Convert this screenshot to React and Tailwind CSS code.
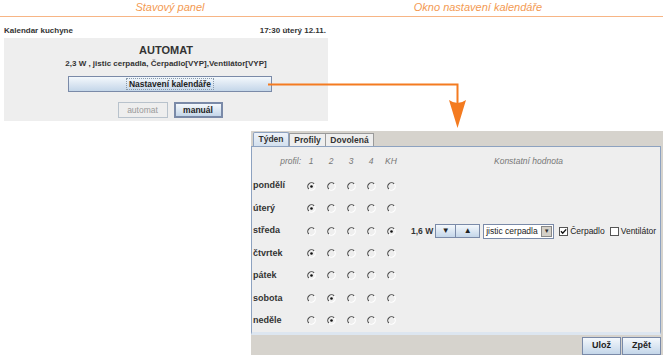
import React from 'react';

const days = [
    { name: 'pondělí', sel: 0 },
    { name: 'úterý', sel: 0 },
    { name: 'středa', sel: 4, extra: true },
    { name: 'čtvrtek', sel: 0 },
    { name: 'pátek', sel: 0 },
    { name: 'sobota', sel: 1 },
    { name: 'neděle', sel: 1 },
];

function Radio({ on }) {
    return (
        <svg width="9" height="9" viewBox="0 0 9 9">
            <path d="M7.2 1.9 A3.6 3.6 0 1 0 1.8 7.1" fill="none" stroke="#4a4a4a" strokeWidth="1.1" />
            <path d="M1.8 7.1 A3.6 3.6 0 0 0 7.2 1.9" fill="none" stroke="#ffffff" strokeWidth="1.1" />
            {on && <circle cx="4.5" cy="4.5" r="1.3" fill="#111" />}
        </svg>
    );
}

function Check({ on }) {
    return (
        <svg width="9" height="9" viewBox="0 0 9 9" className="shrink-0">
            <rect x="0.5" y="0.5" width="8" height="8" fill="#fff" stroke="#555" />
            {on && <path d="M2 4.3 L3.7 6.3 L7.2 2.4" fill="none" stroke="#111" strokeWidth="1.4" />}
        </svg>
    );
}

const ocean = 'bg-gradient-to-b from-[#f4f8fc] to-[#c4d6e9] border border-[#7a8aa8] text-[#222]';

export default function App() {
    return (
        <div className="relative w-[663px] h-[355px] overflow-hidden bg-white font-['Liberation_Sans',Arial,sans-serif] text-[#333]">
            {/* Titles */}
            <div className="flex h-[17px] border-b border-[#f7b585] italic text-[11px] text-[#f39a52] leading-[15px]">
                <div className="w-[340px] text-center">Stavový panel</div>
                <div className="w-[276px] text-center">Okno nastavení kalendáře</div>
            </div>

            {/* Stavovy panel */}
            <div className="ml-[4px] w-[324px]">
                <div className="flex justify-between h-[21px] items-end pb-[2px] text-[8px] font-bold leading-[10px] pr-[2px]">
                    <span>Kalendar kuchyne</span>
                    <span>17:30 úterý 12.11.</span>
                </div>
                <div className="h-[83px] bg-[#eeeeee] flex flex-col items-center pt-[5px]">
                    <div className="text-[11px] font-bold leading-[14px]">AUTOMAT</div>
                    <div className="text-[8px] font-bold leading-[12px] mt-px">2,3 W , jistic cerpadla, Čerpadlo[VYP],Ventilátor[VYP]</div>
                    <div className={`mt-[6px] w-[204px] h-[16px] ml-[8px] flex items-center justify-center text-[8.5px] font-bold ${ocean}`}>
                        <span className="border border-dotted border-[#8899aa] px-[2px] leading-[10px]">Nastavení kalendáře</span>
                    </div>
                    <div className="flex gap-[6px] mt-[10px] ml-[8px]">
                        <div className="w-[50px] h-[16px] flex items-center justify-center text-[8.5px] text-[#9a9a9a] bg-[#eeeeee] border border-[#b8c2cc]">automat</div>
                        <div className={`w-[49px] h-[16px] flex items-center justify-center text-[8.5px] font-bold border-[2px] ${ocean}`}>manuál</div>
                    </div>
                </div>
            </div>

            {/* Okno nastaveni */}
            <div className="ml-[251px] mt-[10px] w-[412px] h-[224px] bg-[#d6d3cd] flex flex-col">
                <div className="h-[15px] flex items-end pl-[2px] text-[8.5px] font-bold">
                    <div className="w-[36px] h-[14px] flex items-center justify-center bg-gradient-to-b from-[#eef3f9] to-[#d3e0ee] border border-b-0 border-[#8da2c0] rounded-t-[2px]">Týden</div>
                    <div className="w-[37px] h-[13px] flex items-center justify-center bg-[#eeeeee] border border-b-0 border-[#9a9a9a]">Profily</div>
                    <div className="w-[48px] h-[13px] flex items-center justify-center bg-[#eeeeee] border border-b-0 border-l-0 border-[#9a9a9a]">Dovolená</div>
                </div>
                <div className="h-[189px] w-[410px] bg-[#eeeeee] border border-[#8da2c0] border-b-[3px] border-b-[#dde6f0] flex flex-col">
                    <div className="h-[28px] flex items-center text-[8.5px] italic text-[#777]">
                        <div className="w-[49px] text-right">profil:</div>
                        {['1', '2', '3', '4', 'KH'].map((c) => (
                            <div key={c} className="w-[20px] text-center">{c}</div>
                        ))}
                        <div className="flex-1 text-center pr-[4px]">Konstatní hodnota</div>
                    </div>
                    {days.map((d) => (
                        <div key={d.name} className="h-[22.5px] flex items-center whitespace-nowrap">
                            <div className="w-[49px] shrink-0 pl-px text-[9px] font-bold">{d.name}</div>
                            {[0, 1, 2, 3, 4].map((i) => (
                                <div key={i} className="w-[20px] shrink-0 flex justify-center">
                                    <Radio on={d.sel === i} />
                                </div>
                            ))}
                            {d.extra && (
                                <div className="flex items-center ml-[10px] text-[8.5px] shrink-0">
                                    <span className="font-bold mr-[2px]">1,6 W</span>
                                    <div className={`w-[21px] h-[14px] flex items-center justify-center text-[8px] ${ocean}`}>▼</div>
                                    <div className={`w-[24px] h-[14px] flex items-center justify-center text-[8px] border-l-0 ${ocean}`}>▲</div>
                                    <div className="ml-[3px] w-[71px] h-[15px] bg-white border border-[#7a8aa8] flex items-center">
                                        <span className="flex-1 pl-[2px] text-[8.5px] text-[#222]">jistic cerpadla</span>
                                        <div className="w-[11px] h-[11px] mr-px bg-[#d4d0c8] border border-[#888] flex items-center justify-center text-[6px]">▼</div>
                                    </div>
                                    <div className="ml-[5px] flex items-center gap-[2px]">
                                        <Check on />
                                        <span className="text-[8.5px] text-[#222]">Čerpadlo</span>
                                    </div>
                                    <div className="ml-[5px] flex items-center gap-[2px]">
                                        <Check />
                                        <span className="text-[8.5px] text-[#222]">Ventilátor</span>
                                    </div>
                                </div>
                            )}
                        </div>
                    ))}
                </div>
                <div className="flex-1 flex items-end justify-end pr-[2px] gap-px">
                    <div className={`w-[39px] h-[18px] flex items-center justify-center text-[9px] font-bold ${ocean}`}>Ulož</div>
                    <div className={`w-[39px] h-[18px] flex items-center justify-center text-[9px] font-bold ${ocean}`}>Zpět</div>
                </div>
            </div>

            {/* Connector arrow */}
            <svg className="absolute left-0 top-0 pointer-events-none" width="663" height="355">
                <path d="M268 84.5 H457.5 V104" fill="none" stroke="#f47b20" strokeWidth="2" />
                <path d="M449 100 Q457.5 106 466 100 L457.5 128 Z" fill="#f47b20" />
            </svg>
        </div>
    );
}
